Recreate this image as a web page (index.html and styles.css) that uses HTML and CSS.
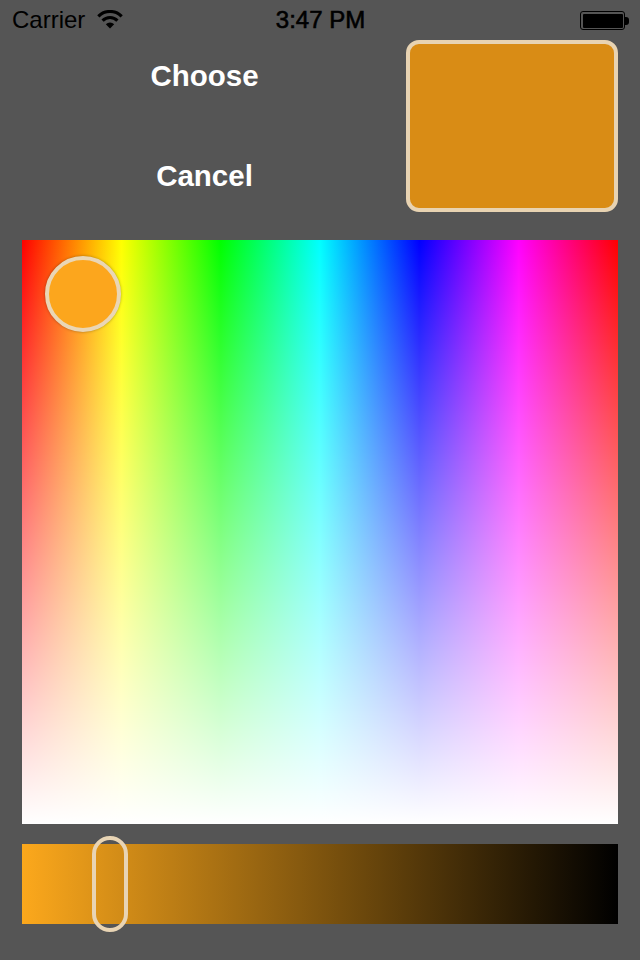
FILE: index.html
```html
<!DOCTYPE html>
<html lang="en">
<head>
<meta charset="utf-8">
<title>Color Picker</title>
<link rel="stylesheet" href="styles.css">
</head>
<body>
<div class="screen">
  <div class="status-bar">
    <div class="status-left">
      <span class="carrier">Carrier</span>
      <svg class="wifi" width="26" height="19" viewBox="0 0 26 19" aria-hidden="true">
        <path d="M1.33 6.33 A16.5 16.5 0 0 1 24.67 6.33" fill="none" stroke="#000" stroke-width="3.2"/>
        <path d="M5.58 10.58 A10.5 10.5 0 0 1 20.42 10.58" fill="none" stroke="#000" stroke-width="3.2"/>
        <path d="M13 18.5 L8.8 14.3 A6 6 0 0 1 17.2 14.3 Z" fill="#000"/>
      </svg>
    </div>
    <div class="status-time">3:47 PM</div>
    <div class="status-right">
      <div class="battery"><div class="battery-fill"></div></div>
      <div class="battery-nub"></div>
    </div>
  </div>

  <div class="header">
    <div class="actions">
      <button class="action">Choose</button>
      <button class="action">Cancel</button>
    </div>
    <div class="swatch"></div>
  </div>

  <div class="palette">
    <div class="palette-fade"></div>
    <div class="palette-handle"></div>
  </div>

  <div class="brightness">
    <div class="brightness-thumb"></div>
  </div>
</div>
</body>
</html>
```

FILE: styles.css
```css
html, body {
  margin: 0;
  padding: 0;
  background: #555555;
}

.screen {
  width: 640px;
  height: 960px;
  background: #555555;
  font-family: "Liberation Sans", Arial, sans-serif;
  display: flex;
  flex-direction: column;
}

.status-bar {
  height: 40px;
  display: grid;
  grid-template-columns: 1fr auto 1fr;
  align-items: center;
  padding: 0 11px 0 12px;
  color: #000;
  font-size: 24px;
}

.status-left {
  display: flex;
  align-items: center;
  gap: 12px;
}

.carrier {
  line-height: 40px;
}

.wifi {
  display: block;
  margin-top: -2px;
}

.status-time {
  line-height: 40px;
  -webkit-text-stroke: 0.6px #000;
}

.status-right {
  display: flex;
  justify-content: flex-end;
  align-items: center;
}

.battery {
  width: 45px;
  height: 19px;
  box-sizing: border-box;
  border: 1.5px solid #000;
  border-radius: 3px;
  padding: 1.5px;
  margin-top: 1px;
}

.battery-fill {
  width: 100%;
  height: 100%;
  background: #000;
  border-radius: 1px;
}

.battery-nub {
  width: 4px;
  height: 8px;
  background: #000;
  border-radius: 0 3px 3px 0;
  margin-top: 1px;
}

.header {
  display: grid;
  grid-template-columns: 1fr 212px;
  gap: 19px;
  padding: 0 22px;
  height: 172px;
}

.actions {
  display: flex;
  flex-direction: column;
  justify-content: space-between;
  padding: 11px 0;
}

.action {
  height: 50px;
  background: none;
  border: none;
  color: #fff;
  font-family: "Liberation Sans", Arial, sans-serif;
  font-weight: bold;
  font-size: 29.5px;
  padding: 0;
  cursor: pointer;
}

.swatch {
  box-sizing: border-box;
  height: 172px;
  border: 4px solid #e8d3b2;
  border-radius: 13px;
  background: #d98c15;
}

.palette {
  position: relative;
  margin: 28px 22px 0;
  height: 584px;
  background: linear-gradient(to right,
    #ff0000 0%,
    #ffff00 16.667%,
    #00ff00 33.333%,
    #00ffff 50%,
    #0000ff 66.667%,
    #ff00ff 83.333%,
    #ff0000 100%);
}

.palette-fade {
  position: absolute;
  inset: 0;
  background: linear-gradient(to bottom, rgba(255,255,255,0) 0%, #ffffff 100%);
}

.palette-handle {
  position: absolute;
  left: 23px;
  top: 16px;
  width: 76px;
  height: 76px;
  box-sizing: border-box;
  border-radius: 50%;
  border: 4px solid #ead6b5;
  background: #fca61d;
  box-shadow: 0 0 3px rgba(0, 0, 0, 0.35);
}

.brightness {
  position: relative;
  margin: 20px 22px 0;
  height: 80px;
  background: linear-gradient(to right, #fca81c 0%, #000000 100%);
}

.brightness-thumb {
  position: absolute;
  left: 70px;
  top: -8px;
  width: 36px;
  height: 96px;
  box-sizing: border-box;
  border: 4px solid #e8d4b4;
  border-radius: 18px;
}
```
